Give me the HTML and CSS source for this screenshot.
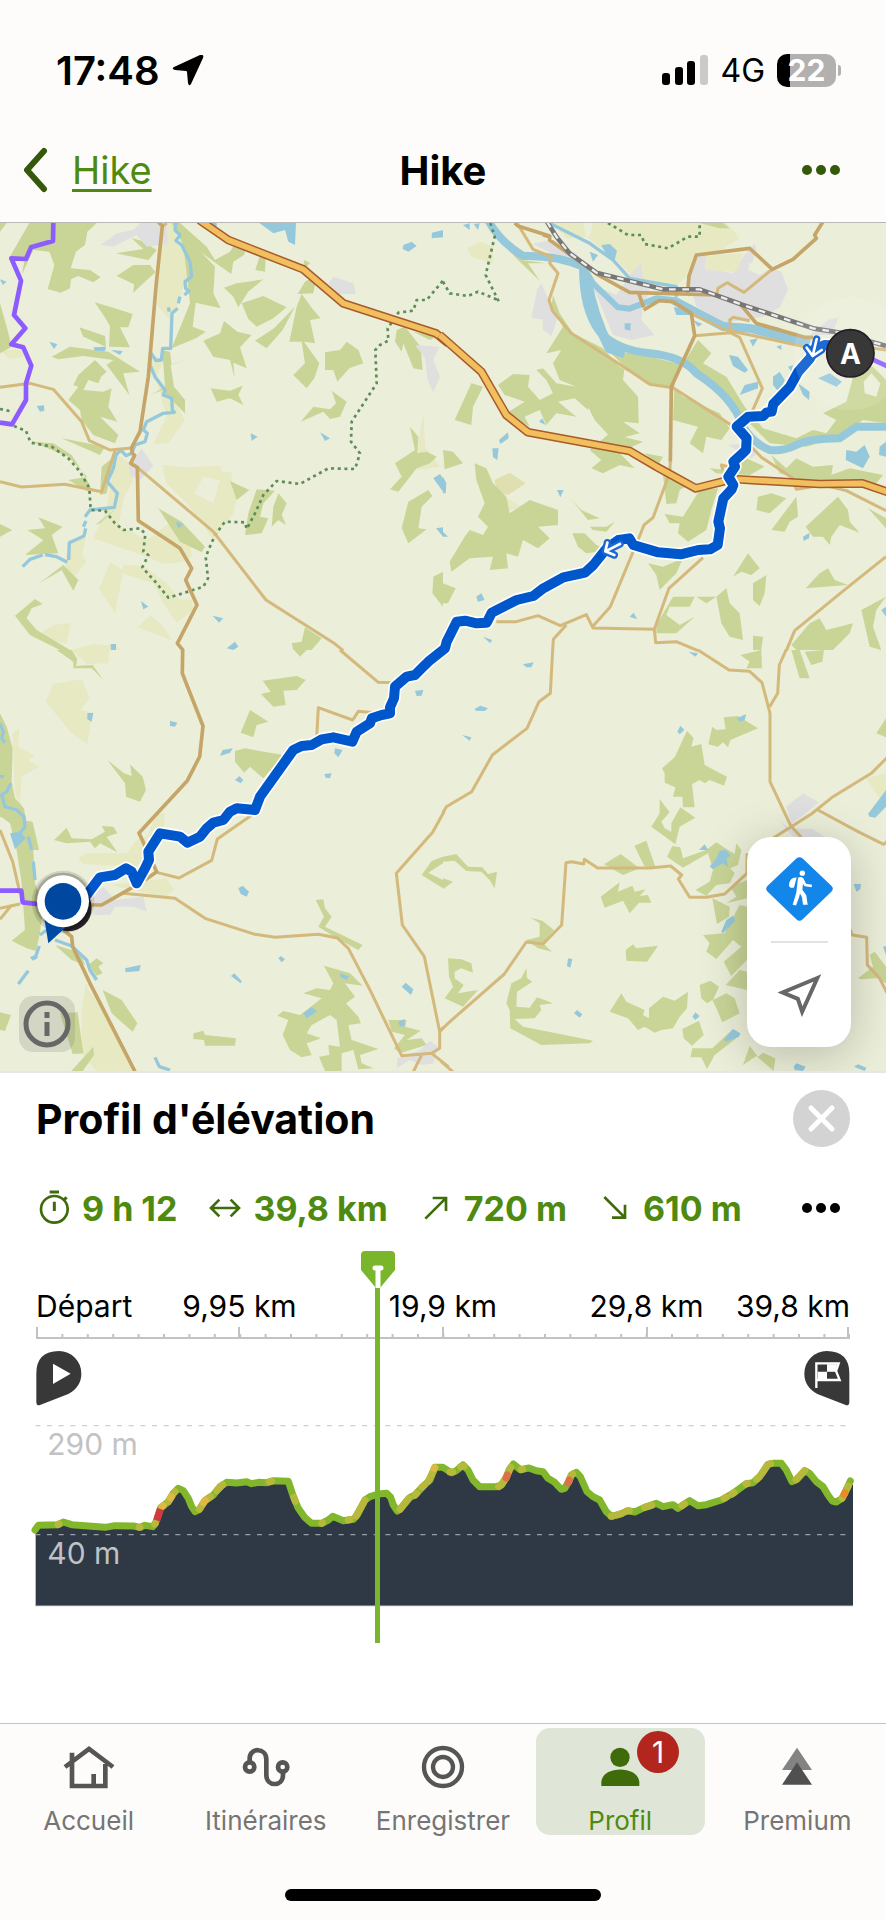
FILE: index.html
```html
<!DOCTYPE html>
<html lang="fr">
<head>
  <meta charset="UTF-8" />
  <meta name="viewport" content="width=device-width, initial-scale=1.0"/>
  <title>Hike</title>
  <link rel="stylesheet" href="styles.css">
</head>
<body>
  <header class="top">
    <div class="status-bar">
      <div class="status-left">
        <span class="time">17:48</span>
        <svg class="location" viewBox="0 0 32 32" aria-hidden="true"><path d="M30 1Q32 1 31 4L19 30Q17 33 16 29L15 18Q15 17 14 17L3 16Q-1 15 2 13L28 1Z"/></svg>
      </div>
      <div class="status-right">
        <svg class="signal" viewBox="0 0 46 32" aria-hidden="true">
          <rect x="0" y="19" width="8" height="12" rx="3"/><rect x="13" y="13" width="8" height="18" rx="3"/><rect x="25" y="7" width="8" height="24" rx="3"/><rect x="38" y="1" width="8" height="30" rx="3" fill="#cbcac8"/>
        </svg>
        <span class="network">4G</span>
        <span class="battery">22</span>
      </div>
    </div>
    <nav class="nav-bar">
      <a class="back" href="#">
        <svg viewBox="0 0 26 46" aria-hidden="true"><path d="M22 4L5 23L22 42"/></svg>
        <span>Hike</span>
      </a>
      <h1>Hike</h1>
      <button class="more more-nav" type="button" aria-label="Plus"><i></i><i></i><i></i></button>
    </nav>
  </header>

  <section class="map">
    <svg class="map-tiles" viewBox="0 9 2658 2544" role="img" aria-label="Carte">
      <rect class="land" width="2658" height="2560"/>

      <!-- north-west -->
      <g>
        <path class="meadow" d="M490 9L520 9 535 70 560 110 575 170 550 200 535 250 510 300 470 255ZM0 390L75 390 70 410 30 417ZM445 400L490 420 470 470 520 540 555 600 505 670 460 672 500 590ZM487 735L560 742 662 738 664 755 695 757 694 800 710 835 700 880 680 905 640 960 600 900 560 850 500 790ZM345 700L398 735 400 780 372 830 355 915 440 960 515 905 570 950 575 1010 545 1025 490 1032 440 1010 280 955 320 870ZM205 960L258 955 245 1000 260 1025 215 1077 195 1040ZM330 1027L370 1050 345 1180 298 1108ZM370 1035L430 1038 500 1090 540 1140 575 1138 580 1170 530 1208 490 1150 460 1090 365 1060ZM452 1187L485 1215 515 1260 412 1222ZM160 1215L212 1210 200 1270 100 1255ZM1270 578L1275 680 1320 740 1250 750 1255 670ZM215 1290L280 1272 350 1278 360 1290Z"/>
        <path class="land" d="M610 770L660 780 640 850 582 820Z"/>
        <path class="forest" d="M88 9L290 9 262 35 255 75 228 95 212 145 270 150 302 172 280 187 235 168 213 178 210 205 182 218 143 207 163 135 148 95 100 90 65 165 75 115 25 118ZM0 9L20 9 0 35ZM348 100L430 87 395 55 425 62 470 90 445 120ZM350 168L400 135 450 135 466 157 430 190 400 218 402 193ZM515 9L540 9 620 80 645 120 690 95 700 78 665 45 715 80 740 80 732 105 700 125 694 162 648 130 605 98 645 140 640 220 662 265 587 248 578 320 617 335 588 355 515 385 570 250 550 75ZM780 105L797 110 795 155 766 150ZM672 203L710 190 745 185 790 178 745 215 715 262 700 230ZM284 247L335 262 398 282 385 322 360 322 390 382 327 380 330 318 310 285ZM725 250L790 228 860 262 820 295 770 320 745 297ZM610 362L660 340 672 303 712 335 755 345 720 382 740 445 700 428 704 475 690 420 640 410ZM765 362L822 325 885 260 848 330 800 385ZM912 120L930 128 910 150ZM915 185L950 165 940 220 893 222ZM905 222L940 270 962 295 930 300 945 370 912 365 958 430 943 475 920 505 880 465 915 430 905 365 868 365 890 260ZM975 397L1020 390 1040 365 1075 390 1090 430 1048 445 1012 485 1000 450 975 450ZM238 322L315 348 318 380 250 350ZM155 410L210 380 325 395 420 455 370 460 388 525 320 435 340 420 250 408 175 418ZM285 420L320 455 303 470 295 490 265 480 250 510 310 515 335 505 325 560 352 605 300 590 355 645 345 670 280 645 245 600 240 570 205 540 235 500 220 495 235 465ZM487 390L510 395 515 435 563 416 512 435 522 500 555 540 555 580 535 560 487 510 452 525 495 500ZM632 505L690 512 728 497 715 525 730 555 690 535 650 545ZM902 605L940 560 990 568 1008 550 995 512 1040 545 1020 590 990 597 970 575ZM0 250L20 320 35 380 0 400ZM185 655L315 680 300 705ZM95 665L160 670 215 705 250 760 272 800 265 815 205 780 262 770 205 710ZM305 740L342 710 320 820 300 825ZM690 783L748 810 710 840ZM770 808L825 812 790 850 780 890 805 895 785 940 735 945 745 880ZM835 820L860 850 845 885 858 915 835 900 815 920 820 860ZM475 865L545 905 615 980 605 997 540 965ZM115 892L188 920 155 945 175 1000 75 1005 130 960 82 930 135 925ZM0 912L37 930 0 950ZM350 865L285 915 300 910ZM118 1090L190 1035 235 1080 220 1112 185 1050ZM105 1137L128 1152 95 1165 80 1195 110 1230 210 1290 180 1290 90 1245 45 1187ZM875 1270L905 1265 915 1222 965 1255 935 1290 880 1290ZM1190 330L1215 320 1262 380 1268 450 1240 445 1210 370 1205 395 1185 365ZM1240 335L1310 350 1290 360ZM1230 620L1255 650 1252 700 1280 695 1310 710 1290 730 1250 745 1195 815 1170 808 1205 770 1185 730 1245 690ZM1225 845L1285 810 1297 828 1265 860 1255 925 1280 928 1225 970 1205 925ZM1329 1055L1300 1070 1297 1120 1329 1160Z"/>
        <path class="urban" d="M302 75L350 40 400 30 420 9 500 9 503 72 440 80 410 45 340 80ZM985 190L1000 170 1060 190 1067 222 1010 222ZM1245 375L1318 380 1300 420 1320 470 1300 517 1283 480 1275 415ZM388 740L425 685 460 738 420 780 388 765Z"/>
        <path class="water" d="M778 9L888 9 885 75 865 65 855 30 820 40ZM600 9L650 9 650 20ZM1210 75L1235 65 1250 78 1225 95 1208 87ZM1296 38L1329 30 1329 52 1295 55ZM148 365L172 373 162 387ZM280 382L318 380 315 393 285 392ZM333 390L368 393 360 405ZM110 558L132 556 133 572 120 575ZM752 640L773 650 755 663ZM960 637L990 655 975 663ZM527 905L550 912 535 925ZM423 1143L445 1160 430 1168ZM638 1187L670 1195 657 1208ZM680 1285L705 1265 715 1280 700 1290ZM332 1272L348 1272 348 1290 333 1290ZM0 178L20 185 8 195ZM1300 775L1320 762 1329 775 1329 815ZM1308 925L1329 922 1329 950Z"/>
        <path class="stream" d="M528 9L525 30 540 45 528 62 545 75 570 125 575 170 555 185 557 205 567 213 553 225M540 230L535 250M505 262L508 275M533 265L516 280 512 385 488 385 484 420 468 422 452 398 450 435 465 470 495 510 490 525 515 535 517 570 523 577 490 580 440 605 430 630 442 640 435 665 405 675 395 700 378 707 362 690 348 705 340 745 322 785 352 820 343 862 270 870 255 890M258 903L250 920M257 925L252 948 208 968 206 1020M202 1027L170 1010 135 1004M128 1005L90 1018 68 1040"/>
        <path class="dots" d="M0 567L38 575M42 618L78 633 92 668 155 680 205 715 240 755 268 805 272 870 315 872 345 910 370 930 420 925 436 942 430 995 445 1005 427 1042 470 1090 505 1133 555 1118 610 1100 624 1075 617 1010 645 945 675 905 735 907 740 927 765 880 790 825 830 783 900 792 985 745 1065 747 1080 700 1053 665 1055 605 1130 490 1126 390 1140 375 1165 362 1163 325 1195 278 1240 272 1250 240 1280 240 1329 182"/>
        <path class="lane" d="M0 502L90 490 160 508 245 605 268 662 330 690 395 684M0 785L65 801 195 793 305 815 345 692M412 742L640 935 798 1140 1000 1268 1030 1292M487 20L500 9"/>
        <path class="road" d="M475 6L487 18 468 200 445 470 420 635 395 683 397 700 404 706 392 730 412 742 415 902 540 985 575 1045 557 1080 591 1155 532 1270 550 1292"/>
        <path class="highway-edge" d="M598 0L685 60 910 148 1030 250 1308 340 1345 370"/>
        <path class="highway" d="M598 0L685 60 910 148 1030 250 1308 340 1345 370"/>
        <path class="trail" d="M160 5L159 63 93 82 78 117 34 115 63 182 42 285 76 325 34 373 70 382 94 437 78 490 78 540 36 613 0 608"/>
      </g>

      <!-- north-east -->
      <g transform="translate(1329 0)">
        <path class="meadow" d="M330 9L370 55 440 50 450 9ZM420 9L850 9 890 55 835 90 760 100 730 170 700 195 580 180 520 120 430 50ZM72 85L110 65 150 80 148 130 85 110ZM135 850L165 820 235 860 200 870Z"/>
        <path class="urban" d="M270 72L320 60 400 100 430 150 345 110ZM560 165L595 130 600 170 620 215 600 260 595 300 635 345 565 360 510 345 465 235 440 190 520 225ZM735 180L765 100 790 105 785 145 870 160 900 110 935 70 940 90 920 150 950 165 985 145 1015 155 1035 210 1010 262 960 290 840 310 760 260ZM283 208L295 190 315 235 345 290 325 348 300 330 298 298 265 295ZM1155 300L1188 292 1165 345 1100 345ZM855 675L905 670 945 700 925 715Z"/>
        <path class="meadow" d="M790 108L900 100 880 155 788 150Z"/>
        <path class="sand" d="M155 780L200 758 248 790 195 825 160 815Z"/>
        <path class="forest" d="M130 9L235 120 310 130 255 130 290 182 225 120 150 40ZM330 225L350 280 390 340 480 385 530 440 620 490 690 500 720 530 830 580 860 625 835 660 790 650 780 700 740 670 765 620 690 600 695 470 765 360 805 400 780 430 850 470 905 560 960 625 1060 655 1110 630 1150 640 1180 600 1140 580 1210 545 1228 480 1220 440 1290 440 1329 480 1329 610 1260 600 1190 650 1090 680 980 670 930 620 850 545 790 480 700 430 580 400 500 395 545 440 540 480 585 530 587 610 540 605 590 640 510 660 455 600 435 560 400 500 350 480 330 430 355 390 310 400 360 320 325 260ZM85 490L120 500 90 560 85 615 35 600ZM165 495L210 462 260 465 255 500 290 540 330 520 310 480 280 450 300 445 340 490 400 500 440 530 435 570 395 535 345 545 400 590 340 580 310 615 290 570 245 590 260 620 190 580 245 545 185 525ZM440 690L500 640 600 665 545 690 530 700 575 745 530 735 480 760 445 745 475 720ZM0 690L30 695 60 730 5 748ZM605 700L660 710 645 735ZM95 730L130 745 150 790 190 830 200 880 260 840 345 870 345 915 285 920 320 955 285 985 240 960 225 1010 190 1000 195 1045 140 1050 150 1010 80 1015 25 1055 20 1025 65 950 80 930 120 945 135 920 105 890 125 850 100 780ZM0 1090L38 1105 15 1150 0 1150ZM385 838L415 870 470 895 435 900ZM410 890L440 920 490 920 515 905 490 935 450 930ZM388 940L425 940 460 975 500 990 430 1000 405 980ZM660 765L745 790 710 810 700 850 670 852ZM665 882L720 890 770 810 825 805 805 870 790 930 735 965 705 940 710 910 680 910ZM800 745L850 750 900 710 965 740 920 765 820 760ZM985 705L1030 745 1060 715 1110 740 1170 735 1165 765 1220 745 1320 765 1300 790 1200 790 1090 785 1010 760ZM945 830L985 820 1030 835 980 880 940 870ZM985 930L1060 830 1065 890 1040 905 1025 935ZM1088 920L1185 830 1215 870 1220 905 1250 938 1190 915 1165 950 1160 975 1140 950 1110 950ZM1275 865L1329 895 1329 925ZM615 1030L660 1040 720 1015 700 1060 650 1110 640 1065ZM870 1070L915 1000 950 1045 925 1065 895 1055ZM930 1090L970 1065 965 1120 950 1158 930 1140ZM1088 1105L1130 1060 1155 1045 1175 1080 1215 1095ZM640 1215L690 1130 755 1130 740 1160 680 1160 670 1185 710 1215 755 1190 700 1240 640 1240ZM820 1130L850 1105 860 1150 890 1180 900 1260 860 1250 835 1210ZM760 1130L820 1130 790 1150ZM930 1247L960 1250 955 1290 930 1290ZM1045 1275L1100 1210 1130 1195 1150 1230 1230 1210 1220 1240 1170 1290 1060 1290ZM1255 1170L1329 1130 1300 1170 1290 1220 1315 1290 1280 1280ZM770 9L840 9 860 25 830 25Z"/>
        <path class="land" d="M1262 485L1285 460 1312 490 1300 530 1265 520ZM965 130L920 130 915 150 950 165Z"/>
        <path class="river" d="M135 0Q170 65 240 108Q340 105 420 140Q420 270 470 335Q520 390 620 400T760 460Q870 530 900 620Q930 670 980 690Q1020 695 1060 675T1190 655L1240 620 1345 620" stroke-width="24"/>
        <path class="river" d="M420 140L450 190 525 262 560 266 640 235 690 240 840 315 1000 330 1090 375" stroke-width="18"/>
        <path class="river" d="M430 175Q450 290 500 385L545 400" stroke-width="30"/>
        <path class="river" d="M690 240L840 320 920 325 1100 370" stroke-width="26"/>
        <path class="stream" d="M320 10L440 70 510 120 560 175 700 200 700 230"/>
        <path class="water" d="M475 75L500 72 522 92 515 120 490 105ZM440 95L465 105 450 125ZM60 15L80 10 80 30ZM92 12L110 10 105 30ZM692 262L730 265 745 285 700 285ZM545 310L563 310 562 332 545 328ZM750 300L778 312 765 320ZM858 405L885 410 915 450 905 458 870 438ZM890 525L905 495 945 485 945 505ZM990 470L1010 455 1025 480 1010 520 990 495ZM1035 440L1050 435 1045 455ZM1065 490L1100 515 1098 540 1080 525ZM1125 475L1160 460 1197 485 1180 500ZM920 360L945 355 930 380ZM1000 380L1015 375 1015 390ZM1210 690L1240 695 1265 675 1280 710 1260 745 1208 720ZM1310 680L1329 665 1329 710 1308 705ZM288 605L298 595 308 615ZM168 660L195 637 197 655 172 672ZM148 685L167 685 163 720 150 712ZM342 810L362 810 352 832ZM0 770L10 790 8 820 0 820ZM0 935L15 950 0 950ZM1080 950L1100 938 1098 955 1082 963ZM100 1130L115 1120 125 1140 105 1145ZM560 1190L572 1178 583 1198ZM120 1250L147 1260 142 1270ZM1315 1170L1329 1160 1329 1190Z"/>
        <path class="dots" d="M495 9L555 45 595 45 605 72 675 85 735 50 770 50 770 15M142 9L155 50 128 165 170 250M0 185L20 220 75 228 105 215 165 240"/>
        <path class="lane" d="M222 9L270 88 325 110 320 130 345 160 318 240 328 272 385 340 560 452 620 493 690 503 860 612 955 712 1050 775 1060 808 1140 795 1210 812 1329 872M752 285L850 330 1085 380M755 347L862 338 890 352 958 505 925 580M865 330L860 300 870 292 920 302M820 230L825 205 852 188 903 217 985 150M682 725L680 760 630 893 603 915 585 960 502 1160 447 1222M160 1205L220 1205 285 1187 352 1217 430 1184 450 1224 634 1228 638 1268 700 1265 765 1292M370 1215L331 1258 329 1292M634 1228L678 1105 780 1013M1329 1010L1210 1105 1055 1232 1030 1292M855 740L835 735 840 750M1290 385L1329 390"/>
        <path class="road" d="M215 9L225 18 320 48 320 60 465 165 560 217 820 225 890 250 940 310 1085 352 1110 352M733 228L738 168 760 105 920 85 988 148 1050 118 1120 55 1115 45 1140 5M588 222L602 262M602 270L648 242 690 245 745 280 755 347 685 500 682 725M320 50L300 45"/>
        <path class="rail" d="M312 5L340 50 380 100 460 158 660 208 770 208 900 255 1110 325 1190 338 1329 378"/>
        <path class="rail-gap" d="M312 5L340 50 380 100 460 158 660 208 770 208 900 255 1110 325 1190 338 1329 378"/>
        <path class="highway-edge" d="M-10 345L115 455 190 585 255 637 560 693 640 740 758 805 870 777 1130 792 1258 790 1340 818"/>
        <path class="highway" d="M-10 345L115 455 190 585 255 637 560 693 640 740 758 805 870 777 1130 792 1258 790 1340 818"/>
        <path class="trail" d="M1270 410L1340 442"/>
      </g>

      <!-- south-west -->
      <g transform="translate(0 1290)">
        <path class="meadow" d="M215 0L328 0 325 40 260 42ZM160 102L245 88 268 145 240 180 277 190 262 283 215 250 170 195 138 155ZM38 250L57 235 55 290 102 318 85 330 118 350 65 378 60 450 75 500 45 430ZM470 490L493 490 492 540 440 565ZM235 625L260 610 380 610 410 570 440 560 440 650 250 642ZM335 705L500 685 522 720 495 740 400 720ZM258 1000L245 1080 245 1210 300 1275 400 1275 310 1080 265 1020Z"/>
        <path class="forest" d="M0 190L20 230 38 295 35 395 45 445 72 475 78 512 98 515 117 600 100 600 105 700 130 760 120 850 108 903 80 895 60 885 35 872 75 840 65 700 50 600 30 520 10 505 0 500ZM170 0L215 0 232 28 228 48 278 45 310 90 275 55 220 55 220 35ZM322 330L372 370 395 378 390 343 428 380 438 420 420 455 378 440 375 400ZM162 570L200 533 215 565 275 568 315 545 305 528 340 530 352 550 320 560 352 607 300 580 285 595 270 575 200 580ZM788 92L890 78 917 90 890 120 850 122 857 165 820 170 783 132 812 125ZM750 180L805 215 770 225 760 262 722 248ZM705 303L735 295 850 315 790 385 750 350 732 368 705 335ZM882 0L920 0 900 20ZM165 885L215 900 245 920 255 945 215 930ZM265 945L290 925 310 940 295 950 308 970 290 977ZM308 1020L365 1050 412 1120 398 1145 335 1090ZM0 1087L33 1095 15 1143 0 1140ZM180 1090L233 1087 250 1210 218 1212ZM280 1190L282 1215 240 1275 205 1273ZM580 1150L610 1142 615 1155 708 1165 705 1187 615 1187 612 1170 580 1167ZM947 750L970 748 975 775 995 800 975 830 1088 885 1075 900 1010 865 955 830 972 800ZM972 947L1050 970 1088 1007 1035 1000 1065 1040 1038 1060 1075 1100 1083 1120 1045 1125 1055 1170 1135 1197 1080 1215 1085 1240 1120 1255 1075 1258 1060 1200 1025 1210 1025 1265 980 1275 957 1220 988 1215 985 1185 1020 1190 1010 1110 990 1095 935 1125 920 1150 963 1165 920 1180 935 1215 905 1222 870 1200 848 1155 865 1110 832 1097 850 1083 900 1095 965 1045 910 1030 950 1015 990 1020 1000 1000ZM1165 1110L1220 1110 1215 1130 1262 1142 1220 1170 1265 1165 1280 1185 1200 1210 1182 1195 1215 1155 1175 1145ZM1265 675L1295 633 1329 620 1329 640 1285 668 1329 690 1329 715Z"/>
        <path class="urban" d="M280 730L312 712 345 750 430 740 440 785 400 770 345 770 330 795 280 795ZM1192 1225L1260 1200 1290 1172 1315 1190 1300 1240 1265 1245 1230 1230 1190 1255Z"/>
        <path class="water" d="M262 190L280 188 275 215 262 208ZM510 212L532 218 525 230 510 228ZM660 318L668 300 698 295 690 308ZM705 390L718 378 730 390 722 400ZM1005 295L1028 300 1015 322 1003 310ZM973 372L995 370 990 385 977 383ZM1245 122L1270 120 1265 137 1250 138ZM715 715L728 707 747 725 740 740 722 732ZM375 955L422 945 418 963 377 967ZM693 978L703 970 725 993 722 1000ZM835 925L842 918 855 928 845 937ZM1020 968L1048 980 1040 990 1022 982ZM910 1090L935 1072 952 1083 920 1105ZM1205 1010L1217 998 1240 1018 1233 1035ZM1195 1115L1213 1107 1215 1128 1200 1130ZM90 922L110 912 113 925 98 932ZM30 550L60 545 78 565 45 598Z"/>
        <path class="stream" d="M0 220L10 245 5 265 15 278M0 380L12 380M33 400L20 425 5 435 15 470 50 480 72 500 75 530 60 550M85 560L95 600M100 635L105 690M140 840L120 855M165 870L215 888 260 930 270 960 290 990M118 888L105 925M85 962L55 1002M465 1222L478 1250 510 1260"/>
        <path class="lane" d="M0 540L38 635 60 730M0 775L60 762M35 765L0 808M1020 0L1135 97 1180 98M950 262L955 173 1058 210 1075 184 1120 188M470 667L537 684 635 631 652 567 760 492M370 730L525 745 615 805 765 853 825 862 955 853 1012 864 1045 895 1110 1020 1205 1217 1295 1210 1319 1195 1319 1145 1273 920 1207 825 1189 670 1298 547 1332 485M1265 1215L1240 1265M1295 1210L1345 1250M1319 1145L1332 1130"/>
        <path class="road" d="M548 0L547 70 609 228 599 320 562 392 417 549 445 610 470 665 435 690M410 705L340 745 305 765 250 765M190 840L215 860 218 890 270 1000 405 1265"/>
        <path class="trail" d="M0 722L64 722 68 757 130 764"/>
      </g>

      <!-- south-east -->
      <g transform="translate(1329 1290)">
        <path class="meadow" d="M1270 385L1329 370 1329 440 1310 445Z"/>
        <path class="forest" d="M892 15L955 0 957 55 910 55 920 35ZM1045 0L1070 0 1100 85 1070 85ZM1085 5L1143 0 1138 35 1105 45ZM1329 205L1300 250 1329 262ZM842 202L885 198 945 235 862 270 855 292 840 277 825 290 796 283 808 230 820 240 848 238ZM732 242L752 265 745 290 775 282 785 345 852 380 843 407 800 390 785 400 770 390 747 403 755 472 720 472 718 440 690 440 697 412 665 398 665 370 657 355 695 322ZM650 447L680 487 655 515 665 535 685 545 685 520 712 472 757 503 710 530 697 583 625 530 650 490ZM574 587L610 572 637 650 605 650ZM483 643L533 612 590 655 540 675ZM688 588L712 592 720 625 790 600 820 577 855 600 875 612 880 580 895 600 885 645 862 655 875 670 860 700 820 705 790 737 757 720 800 695 810 660 795 610 720 653 672 620ZM473 740L530 697 525 725 568 707 575 725 608 718 590 738 615 735 625 758 588 758 560 790 540 752 485 773ZM0 620L40 612 75 650 118 652 135 672 162 665 155 715 140 690 115 665 70 663 35 632 0 635ZM0 685L30 695 0 718ZM263 803L298 812 333 840 300 880 327 905 285 895 250 870 290 860 290 820ZM808 745L860 770 858 800 822 822ZM912 690L862 710 880 740 850 760 912 745ZM890 765L912 770 912 930 865 978 842 935 895 890 870 870 820 927 790 905 800 880 780 855 845 850ZM848 1005L890 960 912 965 912 1020ZM548 900L570 883 580 895 645 887 612 935 550 932ZM15 925L55 928 85 940 90 968 55 955 35 965 35 985 62 1005 45 1030 105 1020 60 1070 5 1045 30 1010 18 980ZM250 955L252 985 268 995 222 1025 220 1070 260 1073 282 1042 330 1060 290 1065 295 1080 275 1105 215 1107 240 1130 340 1150 450 1172 440 1180 295 1185 202 1135 200 1080 190 1060 205 1000 235 985ZM500 1085L535 1030 550 1055 605 1080 600 1095 618 1105 618 1075 660 1040 695 1052 735 1025 732 1075 710 1100 690 1135 655 1140 635 1148 605 1130 585 1140 555 1105ZM770 1005L802 992 828 1010 810 1050 850 1030 875 1045 890 1090 838 1117 820 1075 808 1050 792 1060 775 1045ZM718 1137L768 1112 782 1155 747 1187 722 1165ZM748 1195L808 1195 870 1137 880 1165 815 1215 792 1257 775 1222 742 1222ZM920 1187L945 1220 960 1208 997 1225 992 1263 940 1218 900 1245ZM1245 985L1290 950 1280 915 1295 905 1329 950 1329 1000 1300 985 1255 988Z"/>
        <path class="urban" d="M1030 470L1080 430 1127 457 1075 500 1045 520ZM1015 515L1040 535 1110 537 1145 560 1100 600 1030 540Z"/>
        <path class="water" d="M737 5L765 10 757 20ZM240 43L272 37 265 52 250 52ZM95 177L112 167 135 175 125 183 98 182ZM57 255L85 262 80 272ZM882 205L910 192 905 210 890 215ZM712 227L724 240 710 253 703 245ZM768 600L785 583 795 600ZM800 650L820 625 830 602 850 600 862 618 850 625 855 652 840 640 810 657ZM835 845L850 810 870 797 877 812 840 850ZM375 925L388 927 382 953 372 948ZM393 1090L402 1080 418 1093 410 1103ZM748 1100L757 1087 770 1098 757 1110ZM842 1170L870 1137 892 1150 888 1160 850 1175ZM1052 1250L1060 1240 1088 1250 1080 1263 1055 1260ZM1233 1250L1245 1243 1270 1253 1265 1263ZM1275 492L1329 420 1329 470 1297 503 1280 500ZM1232 702L1254 702 1252 718 1240 725ZM1320 890L1329 888 1329 915Z"/>
        <path class="lane" d="M329 0L322 130 288 155 252 235 148 315 86 425 10 470 0 488M765 0L858 60 920 64 957 98 981 190 981 395 1043 527 1075 562M980 170L1004 130 1009 45 1030 -2M912 610L912 670 845 732 790 742 740 742 706 687 716 675 683 648 620 654 464 654 424 628 422 642 386 635 369 638 356 825 300 882 250 876 184 972 15 1120 -5 1140M985 568L1105 492 1170 440 1285 370 1335 320M1125 480L1245 545 1322 583 1335 572M1222 840L1228 855 1271 862 1273 945 1310 985 1335 1035M-5 1235L35 1270"/>
      </g>

      <!-- route -->
      <path class="route-edge" d="M2551 378L2475 375 2442 388 2430 415 2395 455 2370 500 2320 552 2315 575 2300 577 2290 588 2245 590 2210 620 2240 655 2238 690 2225 703 2200 725 2205 740 2185 770 2200 795 2195 808 2170 835 2155 905 2160 925 2153 975 2130 988 2095 990 2042 1003 1975 997 1900 975 1888 955 1855 960 1820 985 1780 1035 1755 1058 1690 1072 1630 1105 1600 1128 1550 1140 1475 1178 1460 1208 1430 1210 1395 1202 1370 1205 1355 1235 1340 1265 1335 1285 1285 1325 1265 1345 1245 1365 1220 1370 1185 1400 1182 1435 1170 1462 1170 1480 1145 1485 1115 1495 1110 1510 1070 1535 1057 1565 1000 1552 965 1558 935 1575 905 1578 880 1590 780 1730 765 1770 710 1765 690 1775 670 1800 640 1808 620 1825 600 1850 562 1868 540 1850 480 1840 445 1895 447 1920 435 1945 410 1990 395 1955 378 1945 345 1965 300 1972 260 2025 190 2045"/>
      <path class="route" d="M2551 378L2475 375 2442 388 2430 415 2395 455 2370 500 2320 552 2315 575 2300 577 2290 588 2245 590 2210 620 2240 655 2238 690 2225 703 2200 725 2205 740 2185 770 2200 795 2195 808 2170 835 2155 905 2160 925 2153 975 2130 988 2095 990 2042 1003 1975 997 1900 975 1888 955 1855 960 1820 985 1780 1035 1755 1058 1690 1072 1630 1105 1600 1128 1550 1140 1475 1178 1460 1208 1430 1210 1395 1202 1370 1205 1355 1235 1340 1265 1335 1285 1285 1325 1265 1345 1245 1365 1220 1370 1185 1400 1182 1435 1170 1462 1170 1480 1145 1485 1115 1495 1110 1510 1070 1535 1057 1565 1000 1552 965 1558 935 1575 905 1578 880 1590 780 1730 765 1770 710 1765 690 1775 670 1800 640 1808 620 1825 600 1850 562 1868 540 1850 480 1840 445 1895 447 1920 435 1945 410 1990 395 1955 378 1945 345 1965 300 1972 260 2025 190 2045"/>
      <circle cx="2551" cy="400" r="170" fill="#fff" opacity=".12"/>
      <g class="route-arrow">
        <path class="arrow-edge" d="M1860 972L1816 994M1822 968L1816 994 1843 1005M2450 357L2438 408M2420 383L2438 408 2465 390"/>
        <path d="M1860 972L1816 994M1822 968L1816 994 1843 1005M2450 357L2438 408M2420 383L2438 408 2465 390"/>
      </g>

      <!-- start and position markers -->
      <circle cx="2551" cy="400" r="71" fill="#383838" stroke="#261c2c" stroke-width="5"/>
      <text class="marker-text" x="2551" y="431">A</text>
      <circle cx="205" cy="2064" r="70" fill="#2b2328"/>
      <circle cx="189" cy="2046" r="94" fill="#000" opacity=".12"/>
      <circle cx="189" cy="2044" r="86" fill="#000" opacity=".2"/>
      <path d="M132 2090L145 2170 205 2115Z" fill="#004aa3"/>
      <circle cx="189" cy="2044" r="78" fill="#fff"/>
      <circle cx="189" cy="2044" r="55" fill="#00489f"/>
    </svg>

    <button class="info" type="button" aria-label="Informations">
      <svg viewBox="0 0 56 56" aria-hidden="true"><circle cx="28" cy="28" r="21"/><path d="M28 16v6M28 26v14"/></svg>
    </button>
    <div class="map-controls">
      <button type="button" aria-label="Randonnée">
        <svg class="hiker" viewBox="966 622 201 191" aria-hidden="true">
          <path d="M1057 626Q1066 618 1076 626L1162 708Q1171 717 1162 726L1076 808Q1066 817 1057 808L971 726Q962 717 971 708Z" fill="#1286e9"/>
          <circle cx="1075" cy="670" r="8" fill="#fff"/>
          <path d="M1058 683Q1036 682 1035 706Q1036 716 1050 713ZM1062 684Q1070 678 1078 685L1086 702 1104 705 1103 712 1082 709 1077 702 1075 720 1087 736 1091 765 1077 765 1074 742 1068 731 1065 743 1056 767 1046 765 1057 728Z" fill="#fff"/>
        </svg>
      </button>
      <hr>
      <button type="button" aria-label="Ma position">
        <svg class="locate" viewBox="1001 972 130 130" aria-hidden="true"><path d="M1120 984L1015 1028 1061 1047 1074 1086Z" fill="none" stroke="#676767" stroke-width="12"/></svg>
      </button>
    </div>
  </section>

  <main class="panel">
    <div class="panel-head">
      <h2>Profil d'élévation</h2>
      <button class="close" type="button" aria-label="Fermer">
        <svg viewBox="0 0 57 57" aria-hidden="true"><path d="M18 18L39 39M39 18L18 39"/></svg>
      </button>
    </div>

    <div class="stats">
      <div class="stat">
        <svg viewBox="108 361 108 108" aria-hidden="true"><circle cx="163" cy="419" r="40"/><path d="M190 392l10-9M163 396v28" stroke-width="9"/><path d="M149 367h28" stroke-width="9"/></svg>
        <span>9 h 12</span>
      </div>
      <div class="stat">
        <svg viewBox="628 361 108 108" aria-hidden="true"><path d="M640 415H724M665 390L640 415 665 440M699 390L724 415 699 440"/></svg>
        <span>39,8 km</span>
      </div>
      <div class="stat">
        <svg viewBox="1254 361 108 108" aria-hidden="true"><path d="M1276 447L1337 386M1298 385H1338V424"/></svg>
        <span>720 m</span>
      </div>
      <div class="stat">
        <svg viewBox="455 361 108 108" aria-hidden="true"><path d="M477 382L538 443M500 444H539V405"/></svg>
        <span>610 m</span>
      </div>
      <button class="more" type="button" aria-label="Plus de statistiques"><i></i><i></i><i></i></button>
    </div>

    <div class="chart">
      <div class="distances">
        <span>Départ</span><span>9,95 km</span><span>19,9 km</span><span>29,8 km</span><span>39,8 km</span>
      </div>
      <svg class="ruler" viewBox="0 0 814 16" aria-hidden="true">
        <path d="M0 14H814" stroke-width="2"/>
        <path d="M0 12H814" stroke-width="4" stroke-dasharray="2 23.4"/>
        <path d="M1 3V14M203 3V14M407 3V14M611 3V14M812 3V14" stroke-width="2"/>
      </svg>
      <svg class="profile" viewBox="108 -120 2442 810" role="img" aria-label="Altitude">
        <path d="M109 -20Q109 -86 177 -87A67 67 0 0 1 244 -19Q244 20 205 42L118 76Q109 77 109 66Z" fill="#383838"/>
        <path d="M159 -49L212 -19 159 12Z" fill="#fff"/>
        <path d="M2548 -20Q2548 -86 2480 -87A67 67 0 0 0 2413 -19Q2413 20 2452 42L2539 76Q2548 77 2548 66Z" fill="#383838"/>
        <path d="M2449 24V-50H2516L2508 -27 2519 0H2451" fill="none" stroke="#fff" stroke-width="7"/>
        <path d="M2481 -47H2512L2505 -25H2481ZM2453 -25H2481V-3H2453Z" fill="#fff"/>

        <path d="M107 678V440L175 434 190 426 315 442 458 440 482 383 520 340 535 325 565 355 585 395 640 345 680 307 865 304 895 385 935 430 965 430 998 409 1060 418 1095 360 1160 340 1192 393 1230 352 1290 300 1305 262 1354 278 1389 255 1419 300 1439 320 1489 320 1519 292 1540 252 1587 264 1629 275 1684 328 1714 285 1729 277 1761 335 1799 360 1834 409 1884 392 1969 370 2034 385 2069 362 2119 374 2164 360 2239 311 2279 290 2304 253 2344 250 2376 305 2414 272 2469 320 2497 363 2526 355 2551 310 2559 315V678Z" fill="#2e3945"/>
        <path d="M107 677H2559" stroke="#858d99" stroke-width="3"/>
        <path class="grid-line" d="M106 137H2540"/>
        <path class="grid-line grid-low" d="M106 464H2540"/>
        <text class="grid-text" x="142" y="225">290 m</text>
        <text class="grid-text grid-text-low" x="142" y="551">40 m</text>

        <path class="slope" d="M105 450L115 436 175 434 190 426 215 434 315 442 345 437 400 438 420 442 435 436 458 440 465 432 470 420 482 383 505 365 520 340 535 325 550 332 565 355 575 380 585 395 598 388 615 362 640 345 660 320 680 307 710 309 740 305 755 311 775 307 800 308 820 302 865 304 880 350 895 385 915 413 935 430 965 430 985 420 998 409 1030 422 1060 418 1072 405 1095 360 1110 350 1135 342 1160 340 1172 352 1180 375 1192 393 1200 388 1230 352 1245 345 1270 318 1290 300 1305 262 1329 262 1354 278 1369 272 1389 255 1404 270 1419 300 1439 320 1489 320 1504 315 1519 292 1527 270 1540 252 1561 269 1587 264 1609 272 1629 275 1644 295 1664 307 1684 328 1694 325 1706 305 1714 285 1729 277 1741 290 1761 335 1779 350 1799 360 1819 395 1834 409 1859 403 1884 392 1904 396 1934 382 1969 370 1989 380 2019 374 2034 385 2049 375 2069 362 2094 377 2119 374 2164 360 2199 340 2239 311 2259 308 2279 290 2304 253 2319 250 2344 250 2359 270 2376 305 2391 298 2414 272 2429 280 2449 305 2469 320 2484 345 2497 363 2509 366 2526 355 2534 340 2551 303"/>
        <path class="slope mild" d="M174 434L177 432M418 442L420 442M464 432L466 430M505 365L520 340 525 335M598 388L615 362 632 350M650 332L668 314M808 306L815 304M882 352L886 364M965 430L968 429M1045 420L1050 419M1068 408L1095 360M1200 388L1226 355M1245 345L1250 340M1265 322L1272 316M1285 304L1305 262M1350 276L1358 276M1382 260L1392 258M1496 320L1504 315 1519 292 1532 262M1564 269L1568 268M1706 305L1714 285 1718 282M1834 409L1836 409M1850 405L1866 400M1880 393L1888 393M1934 382L1955 376M2046 377L2053 372M2172 356L2178 352M2196 342L2202 338M2238 312L2242 310M2270 298L2278 290M2286 280L2304 253 2312 251M2388 299L2414 272M2526 355L2545 318"/>
        <path class="slope medium" d="M486 380L490 377M512 354L514 350M610 368L616 361M1302 266L1303 264"/>
        <path class="slope steepest" d="M470 421L481 387"/>
        <path class="slope steep" d="M1518 294L1522 285M1704 309L1708 300"/>
        <path class="slope hard" d="M2532 344L2535 338"/>
      </svg>
      <div class="cursor" style="left: 42%">
        <svg viewBox="0 0 34 37" aria-hidden="true"><path d="M4 0H30Q34 0 34 4V19L19 37H15L0 19V4Q0 0 4 0Z" fill="#79b62c"/><path d="M14 17H20M17 18V36" stroke="#fff" stroke-width="5" stroke-linecap="round"/></svg>
      </div>
    </div>
  </main>

  <nav class="tab-bar">
    <div class="tabs">
      <a class="tab" href="#">
        <svg viewBox="181 87 168 168" aria-hidden="true"><path d="M193 171L265 117 337 171M214 128V228H314V162M279 228V192" fill="none" stroke="#555" stroke-width="14"/></svg>
        <span>Accueil</span>
      </a>
      <a class="tab" href="#">
        <svg viewBox="709 87 168 168" aria-hidden="true"><g fill="none" stroke="#555" stroke-width="14"><circle cx="744" cy="171" r="14"/><circle cx="843" cy="171" r="14"/><path d="M744 157V145C744 112 794 112 794 148V195C794 231 844 231 844 195V185"/></g></svg>
        <span>Itinéraires</span>
      </a>
      <a class="tab" href="#">
        <svg viewBox="0 0 168 168" aria-hidden="true"><g fill="none" stroke="#555" stroke-width="13"><circle cx="84" cy="84" r="57"/><circle cx="84" cy="84" r="30"/></g></svg>
        <span>Enregistrer</span>
      </a>
      <a class="tab active" href="#">
        <svg viewBox="446 87 168 168" aria-hidden="true"><circle cx="530" cy="142" r="29" fill="#3f6b0a"/><path d="M474 228V217C476 166 585 166 588 217V228Z" fill="#3f6b0a"/></svg>
        <span>Profil</span>
        <b class="badge">1</b>
      </a>
      <a class="tab" href="#">
        <svg viewBox="978 87 168 168" aria-hidden="true"><path d="M1062 113L1107 180H1017Z" fill="#838383"/><path d="M1062 157L1107 224H1017Z" fill="#505050"/></svg>
        <span>Premium</span>
      </a>
    </div>
    <div class="home-indicator"></div>
  </nav>
</body>
</html>
```
FILE: styles.css
```css
* {
  box-sizing: border-box;
}

body {
  margin: 0;
  min-height: 100vh;
  display: flex;
  flex-direction: column;
  background-color: #fff;
  color: #000;
  font-family: Inter, "Liberation Sans", sans-serif;
}

h1, h2 {
  margin: 0;
  font-weight: 700;
}

a {
  color: inherit;
  text-decoration: none;
}

button {
  padding: 0;
  border: none;
  background: none;
  cursor: pointer;
}

svg {
  display: block;
}

/* Header */
.top {
  background-color: #fdfcfa;
  border-bottom: 1px solid #b9b8b4;
}

.status-bar {
  height: 118px;
  padding: 22px 50px 0 56px;
  display: flex;
  align-items: center;
  justify-content: space-between;
}

.status-left, .status-right {
  display: flex;
  align-items: center;
  gap: 12px;
}

.time {
  font-size: 40px;
  font-weight: 600;
}

.location {
  width: 32px;
  height: 32px;
}

.signal {
  width: 46px;
  height: 32px;
}

.network {
  font-size: 32px;
}

.battery {
  position: relative;
  width: 59px;
  height: 33px;
  border-radius: 10px;
  background: linear-gradient(to right, #000 22%, #b2b1af 22%);
  color: #fff;
  font-size: 30px;
  font-weight: 700;
  line-height: 33px;
  text-align: center;
}

.battery::after {
  content: "";
  position: absolute;
  right: -5px;
  top: 11px;
  width: 3px;
  height: 11px;
  border-radius: 0 3px 3px 0;
  background-color: #b2b1af;
}

.nav-bar {
  height: 104px;
  padding: 0 46px 0 22px;
  display: grid;
  grid-template-columns: 1fr auto 1fr;
  align-items: center;
}

.nav-bar h1 {
  font-size: 40px;
  margin-left: -24px;
  padding-left: 48px;
}

.back {
  display: flex;
  align-items: center;
  gap: 24px;
  color: #4f8a10;
  font-size: 38px;
  text-decoration: underline;
  text-decoration-thickness: 3px;
  text-underline-offset: 5px;
}

.back svg {
  width: 26px;
  height: 46px;
  fill: none;
  stroke: #34590a;
  stroke-width: 6;
  stroke-linecap: round;
  stroke-linejoin: round;
}

.more {
  display: flex;
  gap: 4px;
  padding: 10px;
}

.more i {
  width: 10px;
  height: 10px;
  border-radius: 50%;
  background-color: #000;
}

.more-nav {
  justify-self: end;
  padding: 10px 0;
}

.more-nav i {
  background-color: #34590a;
}

/* Map */
.map {
  position: relative;
  overflow: hidden;
  border-bottom: 2px solid #e6e6e6;
}

.map-tiles {
  width: 100%;
}

.map-tiles path {
  stroke-linejoin: round;
}

.land { fill: #ebeed8; }
.forest { fill: #c9d597; }
.meadow { fill: #e6e9c2; }
.sand { fill: #e0dfb2; }
.urban { fill: #e0dfe0; }
.water { fill: #96c8dc; }

.river, .stream, .dots, .lane, .road, .rail, .rail-gap,
.highway, .highway-edge, .trail, .route, .route-edge, .route-arrow {
  fill: none;
}

.river { stroke: #96c8dc; }
.stream { stroke: #96c8dc; stroke-width: 10; }
.dots { stroke: #5c8d5b; stroke-width: 8; stroke-dasharray: 9 11; }
.lane { stroke: #d4b97c; stroke-width: 9; }
.road { stroke: #c5a568; stroke-width: 11; }
.rail { stroke: #777; stroke-width: 14; }
.rail-gap { stroke: #eee; stroke-width: 7; stroke-dasharray: 20 20; }
.highway-edge { stroke: #a85b2a; stroke-width: 26; }
.highway { stroke: #f2bf5e; stroke-width: 17; }
.trail { stroke: #8c5cff; stroke-width: 14; }

.route-edge { stroke: #fff; stroke-width: 40; }
.route { stroke: #0057cb; stroke-width: 30; stroke-linecap: round; }
.route-arrow { stroke: #fff; stroke-width: 8; stroke-linecap: round; }
.arrow-edge { stroke: #1a68d4; stroke-width: 22; }

.marker-text {
  fill: #fff;
  font-size: 84px;
  font-weight: 700;
  text-anchor: middle;
}

.info {
  position: absolute;
  left: 19px;
  bottom: 19px;
  width: 56px;
  height: 56px;
  border-radius: 14px;
  background-color: rgba(120, 120, 120, 0.2);
}

.info svg {
  fill: none;
  stroke: #676767;
  stroke-width: 5;
}

.map-controls {
  position: absolute;
  right: 35px;
  bottom: 24px;
  width: 104px;
  height: 210px;
  display: flex;
  flex-direction: column;
  align-items: center;
  border-radius: 24px;
  background-color: #fff;
  box-shadow: 0 8px 48px rgba(0, 0, 0, 0.22);
}

.map-controls button {
  flex: 1;
}

.map-controls hr {
  width: 57px;
  height: 2px;
  margin: 0;
  border: none;
  background-color: #e2e2e2;
}

.hiker {
  width: 67px;
  height: 64px;
}

.locate {
  width: 43px;
  height: 43px;
}

/* Elevation panel */
.panel {
  flex: 1;
  padding: 17px 36px 0;
}

.panel-head {
  display: flex;
  align-items: center;
  justify-content: space-between;
}

.panel-head h2 {
  font-size: 41px;
  line-height: 56px;
}

.close {
  width: 57px;
  height: 57px;
  border-radius: 50%;
  background-color: #d3d3d3;
}

.close svg {
  stroke: #fff;
  stroke-width: 5;
  stroke-linecap: round;
}

.stats {
  margin-top: 43px;
  height: 36px;
  display: flex;
  align-items: center;
  gap: 30px;
}

.stat {
  display: flex;
  align-items: center;
  gap: 10px;
  color: #4f8a10;
  font-size: 34px;
  font-weight: 700;
  white-space: nowrap;
}

.stat svg {
  width: 36px;
  height: 36px;
  fill: none;
  stroke: #3f6b0a;
  stroke-width: 8;
}

.stats .more {
  margin-left: auto;
}

.chart {
  position: relative;
  margin-top: 25px;
  padding: 37px 0 33px;
}

.distances {
  display: grid;
  grid-template-columns: 1fr 2fr 2fr 2fr 1fr;
  font-size: 30px;
  line-height: 36px;
  text-align: center;
  white-space: nowrap;
}

.distances span {
  min-width: 0;
}

.distances span:first-child {
  justify-self: start;
}

.distances span:last-child {
  display: flex;
  justify-content: flex-end;
}

.ruler {
  width: 100%;
  fill: none;
  stroke: #c2c2c2;
}

.profile {
  width: 100%;
  overflow: visible;
}

.grid-line {
  stroke: #d0d0d0;
  stroke-width: 4;
  stroke-dasharray: 15 20;
}

.grid-low { stroke: #9a9fa5; }

.grid-text {
  fill: #c2c2c2;
  font-size: 90px;
}

.grid-text-low { fill: #c0c2c4; }

.slope {
  fill: none;
  stroke: #82b72c;
  stroke-width: 21;
  stroke-linecap: round;
  stroke-linejoin: round;
}

.mild { stroke: #b8b93c; }
.medium { stroke: #dfb946; }
.hard { stroke: #e88b28; }
.steep { stroke: #dc7046; }
.steepest { stroke: #d43840; stroke-linecap: butt; }

.cursor {
  position: absolute;
  top: 0;
  bottom: 0;
  width: 34px;
  margin-left: -17px;
  background: linear-gradient(#79b62c, #79b62c) center / 5px 100% no-repeat;
}

/* Tab bar */
.tab-bar {
  padding: 4px 4px 19px;
  background-color: #fdfcfa;
  border-top: 1px solid #c4c4c2;
}

.tabs {
  display: grid;
  grid-template-columns: repeat(5, 1fr);
  column-gap: 8px;
}

.tab {
  position: relative;
  display: flex;
  flex-direction: column;
  align-items: center;
  gap: 12px;
  padding-top: 11px;
  border-radius: 14px;
  color: #757575;
  font-size: 26px;
  line-height: 28px;
}

.tab svg {
  width: 56px;
  height: 56px;
}

.tab.active {
  background-color: #dfe6d7;
  color: #4f8a10;
}

.badge {
  position: absolute;
  top: 3px;
  left: 60%;
  width: 42px;
  height: 42px;
  border-radius: 50%;
  background-color: #b3261e;
  color: #fff;
  font-size: 30px;
  font-weight: 400;
  line-height: 42px;
  text-align: center;
}

.home-indicator {
  width: 36%;
  height: 12px;
  margin: 54px auto 0;
  border-radius: 6px;
  background-color: #000;
}
```
